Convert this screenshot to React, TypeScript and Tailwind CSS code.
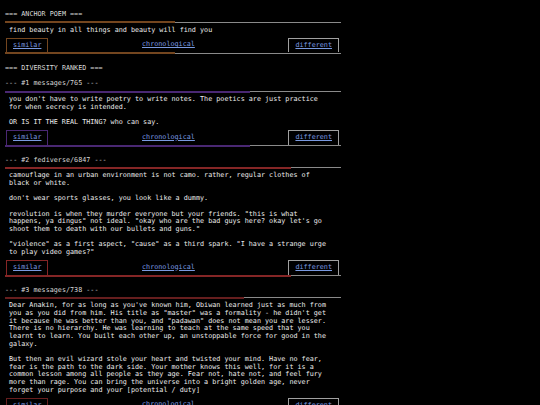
type Item = {
  title: string
  text: string
  pct: number
  border: string
  fill: string
}

const ANCHOR: Item = {
  title: '=== ANCHOR POEM ===',
  text: 'find beauty in all things and beauty will find you',
  pct: 50.6,
  border: 'border-[#74461f]',
  fill: 'bg-[#74461f]',
}

const RANKED: Item[] = [
  {
    title: '--- #1 messages/765 ---',
    text: `you don't have to write poetry to write notes. The poetics are just practice
for when secrecy is intended.

OR IS IT THE REAL THING? who can say.`,
    pct: 73,
    border: 'border-[#4a2873]',
    fill: 'bg-[#4a2873]',
  },
  {
    title: '--- #2 fediverse/6847 ---',
    text: `camouflage in an urban environment is not camo. rather, regular clothes of
black or white.

don't wear sports glasses, you look like a dummy.

revolution is when they murder everyone but your friends. "this is what
happens, ya dingus" not ideal. "okay who are the bad guys here? okay let's go
shoot them to death with our bullets and guns."

"violence" as a first aspect, "cause" as a third spark. "I have a strange urge
to play video games?"`,
    pct: 85,
    border: 'border-[#852626]',
    fill: 'bg-[#852626]',
  },
  {
    title: '--- #3 messages/738 ---',
    text: `Dear Anakin, for as long as you've known him, Obiwan learned just as much from
you as you did from him. His title as "master" was a formality - he didn't get
it because he was better than you, and "padawan" does not mean you are lesser.
There is no hierarchy. He was learning to teach at the same speed that you
learnt to learn. You built each other up, an unstoppable force for good in the
galaxy.

But then an evil wizard stole your heart and twisted your mind. Have no fear,
fear is the path to the dark side. Your mother knows this well, for it is a
common lesson among all people as they age. Fear not, hate not, and feel fury
more than rage. You can bring the universe into a bright golden age, never
forget your purpose and your [potential / duty]`,
    pct: 71,
    border: 'border-[#661e1e]',
    fill: 'bg-[#661e1e]',
  },
]

function Bar({ item }: { item: Item }) {
  return (
    <div className="flex items-center h-[2px]">
      <div className={`h-[2px] ${item.fill}`} style={{ width: `${item.pct}%` }} />
      <div className="h-[1px] flex-1 bg-[#8a8a8a]" />
    </div>
  )
}

function Card({ item, className = '' }: { item: Item; className?: string }) {
  return (
    <section className={className}>
      <p className="text-[#d8d8d8]">{item.title}</p>
      <div className="mt-[2.5px]">
        <Bar item={item} />
      </div>
      <p className="pt-[3.5px] px-[4px] whitespace-pre-wrap text-[#ececec]">{item.text}</p>

      {/* 버튼 줄 */}
      <div className="mt-[3.5px] flex items-stretch justify-between pl-[1px] pr-[2px] h-[14.5px]">
        <div className={`border-t border-x ${item.border} px-[6px] flex items-center`}>
          <a href="#" className="underline text-[#7a9ae0]">similar</a>
        </div>
        <div className="flex-1 flex items-center justify-center">
          <a href="#" className="underline text-[#7a9ae0]">chronological</a>
        </div>
        <div className="border-t border-x border-[#a0a0a0] px-[6px] flex items-center">
          <a href="#" className="underline text-[#7a9ae0]">different</a>
        </div>
      </div>
      <Bar item={item} />
    </section>
  )
}

export default function App() {
  return (
    <div
      className="min-h-screen bg-black text-[6.75px] leading-[7.65px] pl-[5px] pt-[11px] pb-4"
      style={{ fontFamily: '"DejaVu Sans Mono", "Liberation Mono", monospace' }}
    >
      <div className="w-[336px]">
        <Card item={ANCHOR} />

        <p className="mt-[10.5px] text-[#d8d8d8]">=== DIVERSITY RANKED ===</p>

        {RANKED.map((item, i) => (
          <Card key={item.title} item={item} className={i === 0 ? 'mt-[8px]' : 'mt-[10px]'} />
        ))}
      </div>
    </div>
  )
}
